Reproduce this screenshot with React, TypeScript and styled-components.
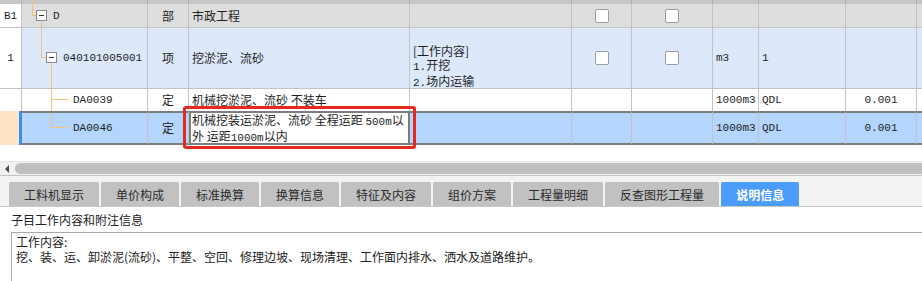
import styled, { createGlobalStyle, css } from 'styled-components'

const GlobalStyle = createGlobalStyle`
  html, body { margin: 0; padding: 0; background: #fff; }
  body {
    font-family: "Noto Sans CJK SC", "Noto Sans", sans-serif;
    font-size: 12px;
    color: #1e1e1e;
    overflow: hidden;
  }
`

const COLS = '22px 126px 41px 221px 162px 60px 81px 46px 87px 71px 1fr'
const LINE = '#c3c3c3'
const TREE = '#f5c07a'
const SEL_BORDER = '#7d7d7d'

const GridWrap = styled.div`
  position: relative;
`

const Row = styled.div<{ $h: number; $bg?: string; $sel?: boolean }>`
  display: grid;
  grid-template-columns: ${COLS};
  height: ${(p) => p.$h}px;
  background: ${(p) => p.$bg ?? '#fff'};
  ${(p) =>
    p.$sel &&
    css`
      & > *:not(:first-child) {
        border-top: 2px solid ${SEL_BORDER};
        border-bottom: 2px solid ${SEL_BORDER};
      }
    `}
`

const Cell = styled.div<{ $align?: 'left' | 'center' | 'right'; $top?: number; $noBottom?: boolean }>`
  box-sizing: border-box;
  display: flex;
  align-items: ${(p) => (p.$top !== undefined ? 'flex-start' : 'center')};
  justify-content: ${(p) =>
    p.$align === 'center' ? 'center' : p.$align === 'right' ? 'flex-end' : 'flex-start'};
  padding: ${(p) => p.$top ?? 0}px 3px 0 3px;
  border-right: 1px solid ${LINE};
  border-bottom: ${(p) => (p.$noBottom ? 'none' : `1px solid ${LINE}`)};
  overflow: hidden;
  white-space: nowrap;
  line-height: 14px;
`

const CellText = styled.span`
  display: block;
  white-space: pre;
  line-height: 14px;
`

const IndexCell = styled(Cell)<{ $current?: boolean }>`
  justify-content: center;
  padding: 0;
  background: ${(p) => (p.$current ? '#fde5c5' : '#fff')};
  border-right: ${(p) => (p.$current ? '3px solid #3c8de6' : `1px solid ${LINE}`)};
`

const StripCell = styled.div`
  box-sizing: border-box;
  background: #c6c6c6;
  border-right: 1px solid #b3b3b3;
  overflow: hidden;
`

const TreeCell = styled(Cell)`
  padding: 0;
  align-items: stretch;
`

const TreeLabel = styled.span`
  display: flex;
  align-items: center;
  margin-left: 2px;
`

const Num = styled.span`
  font-family: "Liberation Mono", "DejaVu Sans Mono", monospace;
  font-size: 11px;
`

const Check = styled.span`
  box-sizing: border-box;
  width: 14px;
  height: 14px;
  border: 1px solid #9c9c9c;
  border-radius: 2px;
  background: #fff;
`

const EditCell = styled(Cell)`
  background: #fff;
  align-items: flex-start;
  padding: 0 2px 0 1px;
  border-left: 2px solid ${SEL_BORDER};
  border-right: 2px solid ${SEL_BORDER};
  white-space: normal;
  line-height: 14px;
`

const Annotation = styled.div`
  position: absolute;
  left: 183px;
  top: 106px;
  width: 233px;
  height: 43px;
  box-sizing: border-box;
  border: 3px solid #e52a1f;
  border-radius: 3px;
  pointer-events: none;
`

const Gap = styled.div`
  height: 16px;
`

const HScroll = styled.div`
  box-sizing: border-box;
  height: 15px;
  display: flex;
  align-items: center;
  background: #f2f2f2;
  border-top: 1px solid #e6e6e6;
  border-bottom: 1px solid #c4c4c4;
`

const ScrollArrow = styled.span`
  width: 0;
  height: 0;
  margin-left: 5px;
  border-top: 4px solid transparent;
  border-bottom: 4px solid transparent;
  border-right: 4px solid #4a4a4a;
`

const ScrollThumb = styled.span`
  flex: 1;
  height: 11px;
  margin-left: 6px;
  background: #bfbfbf;
  border-radius: 6px 0 0 6px;
`

const TabBar = styled.div`
  box-sizing: border-box;
  height: 31px;
  display: flex;
  align-items: flex-end;
  gap: 2px;
  padding-left: 9px;
  background: #f3f3f3;
  border-bottom: 1px solid #c8c8c8;
`

const Tab = styled.div<{ $active?: boolean }>`
  height: 24px;
  display: flex;
  align-items: center;
  padding: 0 15px;
  border-radius: 2px 2px 0 0;
  font-size: 12px;
  background: ${(p) => (p.$active ? '#4a9cfd' : '#c1c1c1')};
  color: ${(p) => (p.$active ? '#fff' : '#2a2a2a')};
  font-weight: ${(p) => (p.$active ? 700 : 400)};
`

const Panel = styled.div`
  background: #fff;
`

const PanelTitle = styled.div`
  padding: 5px 0 0 11px;
  line-height: 16px;
  font-size: 12px;
  color: #222;
`

const NoteBox = styled.div`
  margin: 4px 0 0 11px;
  height: 60px;
  box-sizing: border-box;
  border: 1px solid #a9a9a9;
  border-right: none;
  padding: 1px 4px;
  font-size: 12px;
  color: #222;
`

const NoteLine = styled.div`
  height: 15px;
  line-height: 15px;
`

function Minus({ x, y }: { x: number; y: number }) {
  return (
    <g>
      <rect x={x} y={y} width={10} height={10} fill="#fff" stroke="#8a8a8a" />
      <line x1={x + 2.5} y1={y + 5} x2={x + 7.5} y2={y + 5} stroke="#333" />
    </g>
  )
}

function TreeLines({ level, h }: { level: 'root' | 'item' | 'leaf' | 'last'; h: number }) {
  if (level === 'root') {
    return (
      <svg width={29} height={h} style={{ flex: 'none', display: 'block' }}>
        <line x1={10.5} y1={0} x2={10.5} y2={11.5} stroke={TREE} />
        <line x1={10.5} y1={11.5} x2={14.5} y2={11.5} stroke={TREE} />
        <line x1={19.5} y1={16.5} x2={19.5} y2={h} stroke={TREE} />
        <Minus x={14.5} y={6.5} />
      </svg>
    )
  }
  if (level === 'item') {
    return (
      <svg width={39} height={h} style={{ flex: 'none', display: 'block' }}>
        <line x1={19.5} y1={0} x2={19.5} y2={29.5} stroke={TREE} />
        <line x1={19.5} y1={29.5} x2={24.5} y2={29.5} stroke={TREE} />
        <line x1={29.5} y1={34.5} x2={29.5} y2={h} stroke={TREE} />
        <Minus x={24.5} y={24.5} />
      </svg>
    )
  }
  const mid = level === 'leaf' ? 10.5 : 14.5
  return (
    <svg width={49} height={h} style={{ flex: 'none', display: 'block' }}>
      <line x1={29.5} y1={0} x2={29.5} y2={level === 'leaf' ? h : mid} stroke={TREE} />
      <line x1={29.5} y1={mid} x2={46} y2={mid} stroke={TREE} />
    </svg>
  )
}

const tabs = ['工料机显示', '单价构成', '标准换算', '换算信息', '特征及内容', '组价方案', '工程量明细', '反查图形工程量', '说明信息']

export default function App() {
  return (
    <>
      <GlobalStyle />
      <GridWrap>
        <Row $h={4}>
          <StripCell />
          <StripCell>
            <svg width={20} height={4} style={{ display: 'block' }}>
              <line x1={10.5} y1={0} x2={10.5} y2={4} stroke={TREE} />
            </svg>
          </StripCell>
          {Array.from({ length: 9 }).map((_, i) => (
            <StripCell key={i} />
          ))}
        </Row>

        <Row $h={24} $bg="#dedede">
          <IndexCell><Num>B1</Num></IndexCell>
          <TreeCell>
            <TreeLines level="root" h={23} />
            <TreeLabel><Num>D</Num></TreeLabel>
          </TreeCell>
          <Cell $align="center">部</Cell>
          <Cell>市政工程</Cell>
          <Cell />
          <Cell $align="center"><Check /></Cell>
          <Cell $align="center"><Check /></Cell>
          <Cell />
          <Cell />
          <Cell />
          <Cell />
        </Row>

        <Row $h={61} $bg="#dde9fb">
          <IndexCell><Num>1</Num></IndexCell>
          <TreeCell>
            <TreeLines level="item" h={60} />
            <TreeLabel><Num>040101005001</Num></TreeLabel>
          </TreeCell>
          <Cell $align="center">项</Cell>
          <Cell>挖淤泥、流砂</Cell>
          <Cell $top={16}>
            <CellText>
              {'[工作内容]\n'}
              <Num>1.</Num>
              {'开挖\n'}
              <Num>2.</Num>
              场内运输
            </CellText>
          </Cell>
          <Cell $align="center"><Check /></Cell>
          <Cell $align="center"><Check /></Cell>
          <Cell><Num>m3</Num></Cell>
          <Cell><Num>1</Num></Cell>
          <Cell />
          <Cell />
        </Row>

        <Row $h={22}>
          <IndexCell $noBottom />
          <TreeCell $noBottom>
            <TreeLines level="leaf" h={22} />
            <TreeLabel><Num>DA0039</Num></TreeLabel>
          </TreeCell>
          <Cell $align="center" $noBottom>定</Cell>
          <Cell $noBottom>机械挖淤泥、流砂 不装车</Cell>
          <Cell $noBottom />
          <Cell $noBottom />
          <Cell $noBottom />
          <Cell $noBottom><Num>1000m3</Num></Cell>
          <Cell $noBottom><Num>QDL</Num></Cell>
          <Cell $align="center" $noBottom><Num>0.001</Num></Cell>
          <Cell $noBottom />
        </Row>

        <Row $h={34} $bg="#b4d5fd" $sel>
          <IndexCell $current $noBottom />
          <TreeCell>
            <TreeLines level="last" h={30} />
            <TreeLabel><Num>DA0046</Num></TreeLabel>
          </TreeCell>
          <Cell $align="center">定</Cell>
          <EditCell>
            <span>
              机械挖装运淤泥、流砂 全程运距 <Num>500m</Num>以
              <br />
              外 运距<Num>1000m</Num>以内
            </span>
          </EditCell>
          <Cell />
          <Cell />
          <Cell />
          <Cell><Num>1000m3</Num></Cell>
          <Cell><Num>QDL</Num></Cell>
          <Cell $align="center"><Num>0.001</Num></Cell>
          <Cell />
        </Row>

        <Annotation />
      </GridWrap>

      <Gap />
      <HScroll>
        <ScrollArrow />
        <ScrollThumb />
      </HScroll>

      <TabBar>
        {tabs.map((t) => (
          <Tab key={t} $active={t === '说明信息'}>
            {t}
          </Tab>
        ))}
      </TabBar>

      <Panel>
        <PanelTitle>子目工作内容和附注信息</PanelTitle>
        <NoteBox>
          <NoteLine>工作内容:</NoteLine>
          <NoteLine>挖、装、运、卸淤泥(流砂)、平整、空回、修理边坡、现场清理、工作面内排水、洒水及道路维护。</NoteLine>
        </NoteBox>
      </Panel>
    </>
  )
}
